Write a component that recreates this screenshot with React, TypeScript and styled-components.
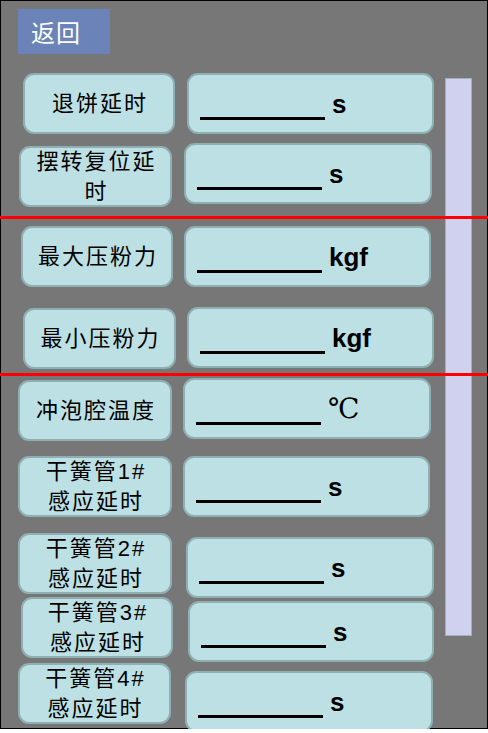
import React from 'react';
import styled, { createGlobalStyle } from 'styled-components';

const GlobalStyle = createGlobalStyle`
  html, body { margin: 0; padding: 0; background: #ffffff; }
  body { font-family: "Liberation Sans", "Noto Sans CJK SC", sans-serif; }
  * { box-sizing: border-box; }
`;

const Frame = styled.div`
  position: relative;
  width: 488px;
  height: 729px;
  border: 1px solid #000000;
  background: #777777;
  display: flex;
  flex-direction: column;
`;

const BackButton = styled.button`
  flex-shrink: 0;
  align-self: flex-start;
  margin: 8px 0 0 17px;
  width: 92px;
  height: 45px;
  padding: 0 0 0 13px;
  border: none;
  background: #6a83b9;
  color: #ffffff;
  font: 400 24px/45px "Noto Sans CJK SC", sans-serif;
  letter-spacing: 1px;
  text-align: left;
`;

const ScrollTrack = styled.div`
  position: absolute;
  z-index: 0;
  left: 444px;
  top: 77px;
  width: 27px;
  height: 558px;
  background: #d0d0ef;
  border: 1px solid #9db2ba;
`;

const Divider = styled.div<{ $mt: number }>`
  position: relative;
  z-index: 2;
  flex-shrink: 0;
  height: 3px;
  margin: ${(p) => p.$mt}px -1px 0;
  background: #ff0000;
`;

const Row = styled.div<{ $mt: number }>`
  position: relative;
  z-index: 1;
  flex-shrink: 0;
  display: flex;
  align-items: flex-start;
  margin-top: ${(p) => p.$mt}px;
`;

const Box = styled.div<{ $ml: number; $mt: number; $w: number }>`
  flex-shrink: 0;
  margin-left: ${(p) => p.$ml}px;
  margin-top: ${(p) => p.$mt}px;
  width: ${(p) => p.$w}px;
  height: 61px;
  background: #bce0e3;
  border: 2px solid #8eb0b3;
  border-radius: 11px;
`;

const Label = styled(Box)`
  display: flex;
  flex-direction: column;
  align-items: center;
  justify-content: center;
  padding-left: 2px;
  color: #000000;
  font-size: 22px;
  line-height: 30px;
  letter-spacing: 2px;
  white-space: nowrap;
`;

const Value = styled(Box)`
  display: flex;
  align-items: flex-start;
  padding-left: 11px;
`;

const Blank = styled.div`
  flex-shrink: 0;
  width: 125px;
  height: 3px;
  margin-top: 42px;
  background: #000000;
`;

const Unit = styled.span<{ $serif?: boolean }>`
  margin-left: 7px;
  margin-top: 16px;
  color: #000000;
  font-family: ${(p) => (p.$serif ? '"DejaVu Serif", "Liberation Serif", serif' : '"Liberation Sans", sans-serif')};
  font-weight: ${(p) => (p.$serif ? 400 : 700)};
  font-size: ${(p) => (p.$serif ? 28 : 26)}px;
  line-height: 26px;
`;

type Geo = { ml: number; mt: number; w: number };
type RowData = { kind: 'row'; lines: string[]; unit: string; mt: number; l: Geo; v: Geo };
type DividerData = { kind: 'divider'; mt: number };

const items: (RowData | DividerData)[] = [
  { kind: 'row', lines: ['退饼延时'], unit: 's', mt: 19, l: { ml: 22, mt: 0, w: 152 }, v: { ml: 12, mt: 0, w: 247 } },
  { kind: 'row', lines: ['摆转复位延', '时'], unit: 's', mt: 9, l: { ml: 18, mt: 3, w: 153 }, v: { ml: 12, mt: 0, w: 248 } },
  { kind: 'divider', mt: 9 },
  { kind: 'row', lines: ['最大压粉力'], unit: 'kgf', mt: 7, l: { ml: 20, mt: 0, w: 152 }, v: { ml: 11, mt: 0, w: 247 } },
  { kind: 'row', lines: ['最小压粉力'], unit: 'kgf', mt: 20, l: { ml: 22, mt: 1, w: 153 }, v: { ml: 11, mt: 0, w: 247 } },
  { kind: 'divider', mt: 4 },
  { kind: 'row', lines: ['冲泡腔温度'], unit: '℃', mt: 2, l: { ml: 17, mt: 2, w: 154 }, v: { ml: 11, mt: 0, w: 248 } },
  { kind: 'row', lines: ['干簧管1#', '感应延时'], unit: 's', mt: 15, l: { ml: 17, mt: 0, w: 154 }, v: { ml: 11, mt: 0, w: 247 } },
  { kind: 'row', lines: ['干簧管2#', '感应延时'], unit: 's', mt: 16, l: { ml: 17, mt: 0, w: 154 }, v: { ml: 14, mt: 4, w: 248 } },
  { kind: 'row', lines: ['干簧管3#', '感应延时'], unit: 's', mt: -1, l: { ml: 20, mt: 0, w: 152 }, v: { ml: 15, mt: 4, w: 246 } },
  { kind: 'row', lines: ['干簧管4#', '感应延时'], unit: 's', mt: 1, l: { ml: 17, mt: 0, w: 153 }, v: { ml: 14, mt: 8, w: 248 } },
];

export default function App() {
  return (
    <>
      <GlobalStyle />
      <Frame>
        <ScrollTrack />
        <BackButton>返回</BackButton>
        {items.map((it, i) =>
          it.kind === 'divider' ? (
            <Divider key={i} $mt={it.mt} />
          ) : (
            <Row key={i} $mt={it.mt}>
              <Label $ml={it.l.ml} $mt={it.l.mt} $w={it.l.w}>
                {it.lines.map((ln) => (
                  <span key={ln}>{ln}</span>
                ))}
              </Label>
              <Value $ml={it.v.ml} $mt={it.v.mt} $w={it.v.w}>
                <Blank />
                <Unit $serif={it.unit === '℃'}>{it.unit}</Unit>
              </Value>
            </Row>
          )
        )}
      </Frame>
    </>
  );
}
